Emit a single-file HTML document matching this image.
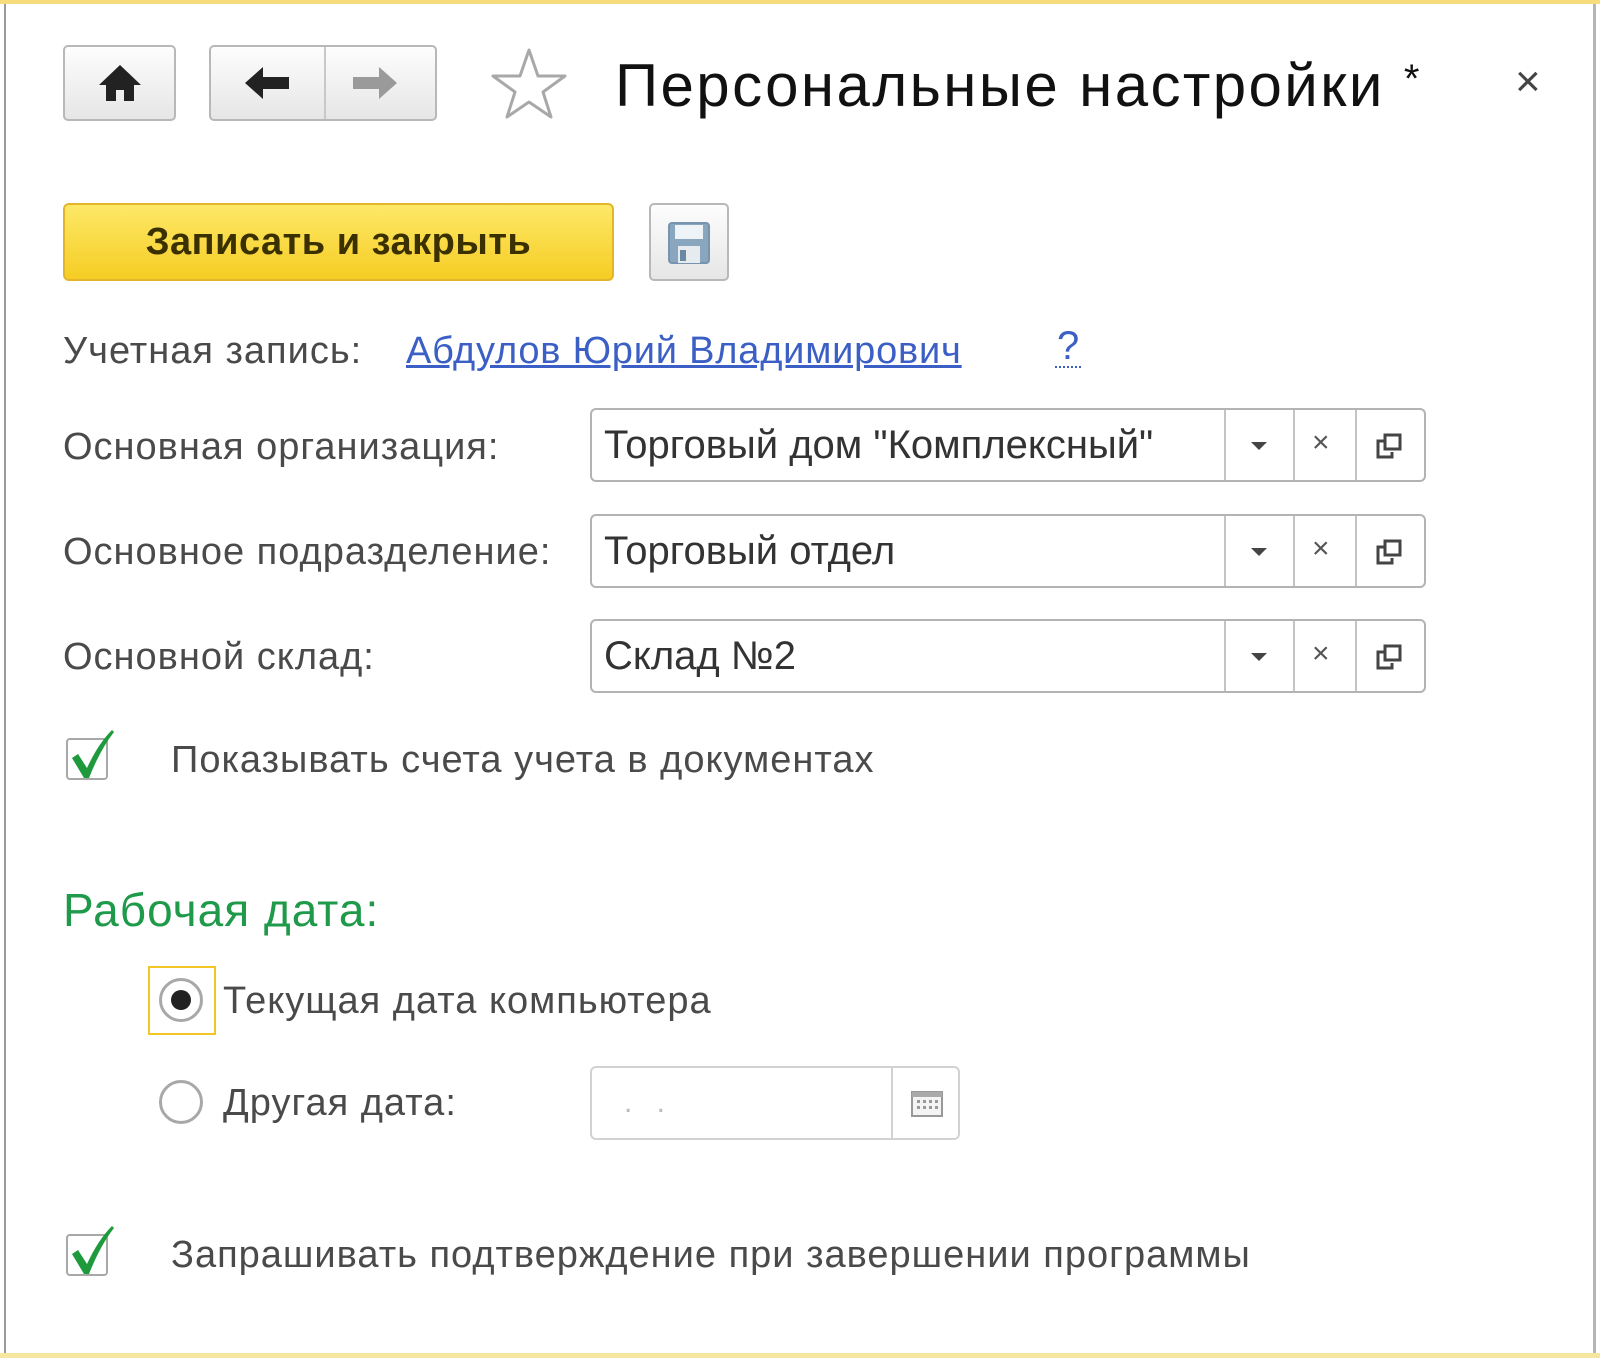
<!DOCTYPE html>
<html><head><meta charset="utf-8">
<style>
*{margin:0;padding:0;box-sizing:border-box}
body{width:1600px;height:1358px;background:#fff;position:relative;overflow:hidden;font-family:"Liberation Sans",Arial,sans-serif}
.a{position:absolute}
.t{position:absolute;white-space:nowrap;line-height:1}
.lbl{font-size:38px;letter-spacing:1px;color:#4a4a4a}
.btn{position:absolute;border:2px solid #b8b8b8;border-radius:5px;background:linear-gradient(#fdfdfd,#e6e6e6)}
.fld{position:absolute;left:590px;width:836px;height:74px;border:2px solid #b3b3b3;border-radius:6px;background:#fff}
.fld .v{position:absolute;left:12px;top:0;line-height:70px;font-size:40px;letter-spacing:0;color:#333;white-space:nowrap}
.fld .d{position:absolute;top:0;bottom:0;width:2px;background:#c4c4c4}
.cb{position:absolute;width:42px;height:42px;border:2px solid #a8a8a8;border-radius:4px;background:#fff}
</style></head><body>
<div class="a" style="left:0;top:0;width:1600px;height:4px;background:#f6dc7a"></div>
<div class="a" style="left:0;top:1353px;width:1600px;height:5px;background:#f6e6a0"></div>
<div class="a" style="left:4px;top:4px;width:2px;height:1349px;background:#9a9a9a"></div>
<div class="a" style="left:1593px;top:4px;width:3px;height:1349px;background:#b5b5b5"></div>

<div class="btn" style="left:63px;top:45px;width:113px;height:76px">
<svg class="a" style="left:32px;top:16px" width="46" height="40" viewBox="0 0 46 40"><path d="M23 2 L2 22 H9 V38 H19 V27 H27 V38 H37 V22 H44 Z" fill="#222"/></svg>
</div>
<div class="btn" style="left:209px;top:45px;width:228px;height:76px">
<div class="a" style="left:113px;top:0;width:2px;height:72px;background:#c8c8c8"></div>
<svg class="a" style="left:32px;top:18px" width="50" height="36" viewBox="0 0 50 36"><path d="M2 18 L20 2 V12 H46 V24 H20 V34 Z" fill="#222"/></svg>
<svg class="a" style="left:138px;top:18px" width="50" height="36" viewBox="0 0 50 36"><path d="M48 18 L30 2 V12 H4 V24 H30 V34 Z" fill="#9a9a9a"/></svg>
</div>
<svg class="a" style="left:490px;top:46px" width="78" height="74" viewBox="0 0 78 74"><path d="M39 4 L48 30 L75 30 L53 46 L61 71 L39 56 L17 71 L25 46 L3 30 L30 30 Z" fill="none" stroke="#a8a8a8" stroke-width="3" stroke-linejoin="round"/></svg>
<div class="t" style="left:615px;top:56px;font-size:60px;letter-spacing:2.4px;color:#111">Персональные настройки <span style="position:relative;top:-14px;font-size:40px">*</span></div>
<div class="t" style="left:1515px;top:60px;font-size:44px;color:#444">×</div>

<div class="a" style="left:63px;top:203px;width:551px;height:78px;border:2px solid #e2b52a;border-radius:6px;background:linear-gradient(#fde867,#f6cd24)"></div>
<div class="t" style="left:63px;top:223px;width:551px;text-align:center;font-size:38px;font-weight:bold;color:#3a3000;letter-spacing:0.5px">Записать и закрыть</div>
<div class="btn" style="left:649px;top:203px;width:80px;height:78px">
<svg class="a" style="left:16px;top:16px" width="44" height="44" viewBox="0 0 44 44"><rect x="2" y="2" width="40" height="40" rx="3" fill="#8aa6bf" stroke="#7893ad" stroke-width="2"/><rect x="8" y="4" width="28" height="14" fill="#eef3f7"/><rect x="11" y="25" width="22" height="17" fill="#e6ebef"/><rect x="13" y="29" width="6" height="11" fill="#6d88a2"/></svg>
</div>

<div class="t lbl" style="left:63px;top:332px">Учетная запись:</div>
<div class="t" style="left:406px;top:332px;font-size:38px;letter-spacing:0.8px;color:#3b5fc4;text-decoration:underline">Абдулов Юрий Владимирович</div>
<div class="t" style="left:1055px;top:326px;font-size:40px;color:#3b5fc4;border-bottom:2px dotted #3b5fc4;padding:0 2px">?</div>

<div class="t lbl" style="left:63px;top:428px">Основная организация:</div>
<div class="fld" style="top:408px"><div class="v">Торговый дом "Комплексный"</div>
<div class="d" style="left:632px"></div><div class="d" style="left:701px"></div><div class="d" style="left:763px"></div>
<svg class="a" style="left:652px;top:27px" width="30" height="16"><path d="M7 5 H23 L15 13 Z" fill="#444"/></svg>
<div class="t" style="left:720px;top:18px;font-size:30px;color:#555">×</div>
<svg class="a" style="left:780px;top:20px" width="34" height="34" viewBox="0 0 34 34"><path d="M12 11 H6 V27 H20 V22" fill="none" stroke="#444" stroke-width="3"/><rect x="13" y="5" width="15" height="14" fill="none" stroke="#444" stroke-width="3"/></svg>
</div>

<div class="t lbl" style="left:63px;top:533px">Основное подразделение:</div>
<div class="fld" style="top:514px"><div class="v">Торговый отдел</div>
<div class="d" style="left:632px"></div><div class="d" style="left:701px"></div><div class="d" style="left:763px"></div>
<svg class="a" style="left:652px;top:27px" width="30" height="16"><path d="M7 5 H23 L15 13 Z" fill="#444"/></svg>
<div class="t" style="left:720px;top:18px;font-size:30px;color:#555">×</div>
<svg class="a" style="left:780px;top:20px" width="34" height="34" viewBox="0 0 34 34"><path d="M12 11 H6 V27 H20 V22" fill="none" stroke="#444" stroke-width="3"/><rect x="13" y="5" width="15" height="14" fill="none" stroke="#444" stroke-width="3"/></svg>
</div>

<div class="t lbl" style="left:63px;top:638px">Основной склад:</div>
<div class="fld" style="top:619px"><div class="v">Склад №2</div>
<div class="d" style="left:632px"></div><div class="d" style="left:701px"></div><div class="d" style="left:763px"></div>
<svg class="a" style="left:652px;top:27px" width="30" height="16"><path d="M7 5 H23 L15 13 Z" fill="#444"/></svg>
<div class="t" style="left:720px;top:18px;font-size:30px;color:#555">×</div>
<svg class="a" style="left:780px;top:20px" width="34" height="34" viewBox="0 0 34 34"><path d="M12 11 H6 V27 H20 V22" fill="none" stroke="#444" stroke-width="3"/><rect x="13" y="5" width="15" height="14" fill="none" stroke="#444" stroke-width="3"/></svg>
</div>

<div class="cb" style="left:66px;top:738px"></div>
<svg class="a" style="left:66px;top:728px" width="56" height="56" viewBox="0 0 56 56"><path d="M6 30 L12 26 L21 40 Q32 16 46 2 L48 4 Q34 22 23 50 L18 50 Z" fill="#1e9a3c"/></svg>
<div class="t lbl" style="left:171px;top:741px">Показывать счета учета в документах</div>

<div class="t" style="left:63px;top:887px;font-size:46px;letter-spacing:1px;color:#1f9a4a">Рабочая дата:</div>

<div class="a" style="left:148px;top:966px;width:68px;height:69px;border:2px solid #f2c624"></div>
<div class="a" style="left:159px;top:978px;width:44px;height:44px;border-radius:50%;border:3px solid #a8a8a8;background:#fff"></div>
<div class="a" style="left:171px;top:990px;width:20px;height:20px;border-radius:50%;background:#222"></div>
<div class="t lbl" style="left:223px;top:982px">Текущая дата компьютера</div>

<div class="a" style="left:159px;top:1080px;width:44px;height:44px;border-radius:50%;border:3px solid #a8a8a8;background:#fff"></div>
<div class="t lbl" style="left:223px;top:1084px">Другая дата:</div>

<div class="a" style="left:590px;top:1066px;width:370px;height:74px;border:2px solid #d2d2d2;border-radius:6px;background:#fff">
<div class="a" style="left:299px;top:0;width:2px;height:70px;background:#d2d2d2"></div>
<div class="t" style="left:32px;top:20px;font-size:30px;color:#bbb;letter-spacing:8px">. .</div>
<svg class="a" style="left:318px;top:22px" width="34" height="28" viewBox="0 0 34 28"><rect x="2" y="2" width="30" height="24" fill="#f4f4f4" stroke="#999" stroke-width="2"/><rect x="2" y="2" width="30" height="5" fill="#aaa"/><g fill="#999"><rect x="7" y="10" width="3" height="3"/><rect x="13" y="10" width="3" height="3"/><rect x="19" y="10" width="3" height="3"/><rect x="25" y="10" width="3" height="3"/><rect x="7" y="16" width="3" height="3"/><rect x="13" y="16" width="3" height="3"/><rect x="19" y="16" width="3" height="3"/><rect x="25" y="16" width="3" height="3"/></g></svg>
</div>

<div class="cb" style="left:66px;top:1234px"></div>
<svg class="a" style="left:66px;top:1224px" width="56" height="56" viewBox="0 0 56 56"><path d="M6 30 L12 26 L21 40 Q32 16 46 2 L48 4 Q34 22 23 50 L18 50 Z" fill="#1e9a3c"/></svg>
<div class="t lbl" style="left:171px;top:1236px">Запрашивать подтверждение при завершении программы</div>
</body></html>
